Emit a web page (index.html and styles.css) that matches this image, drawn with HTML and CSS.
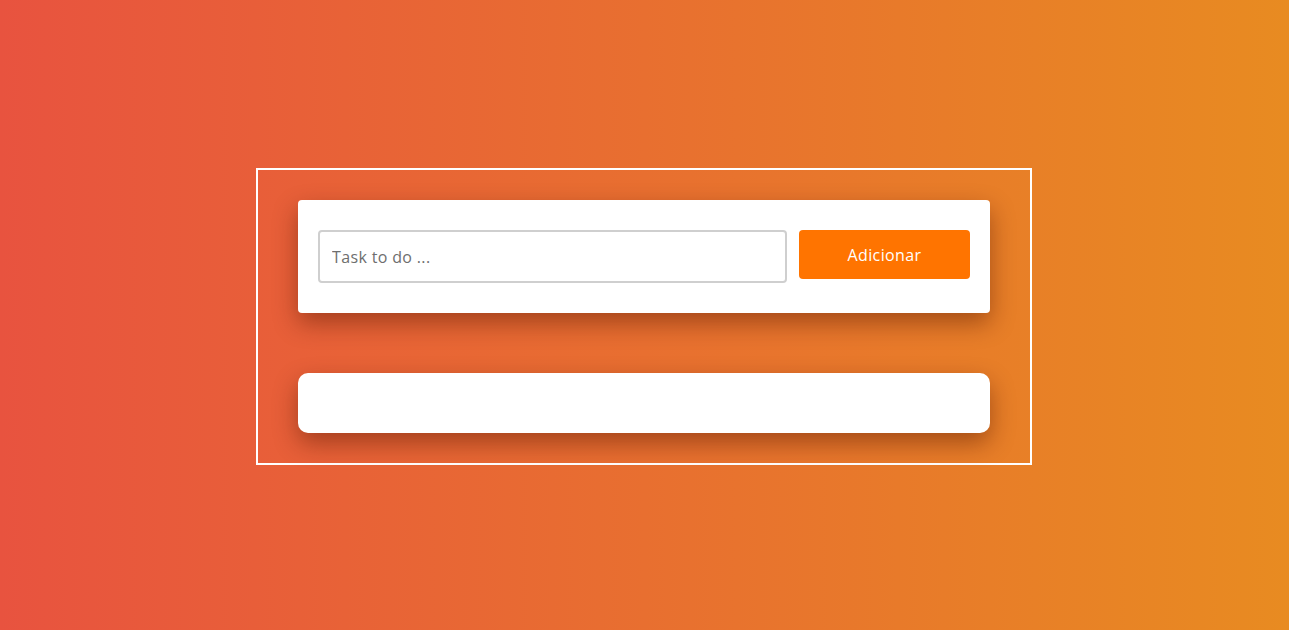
FILE: index.html
```html
<!DOCTYPE html>
<html lang="pt">
<head>
<meta charset="utf-8">
<title>Tasks</title>
<link rel="stylesheet" href="styles.css">
</head>
<body>
<div class="page">
  <div class="frame">
    <form class="card form-card">
      <input class="task-input" type="text" placeholder="Task to do ...">
      <button class="add-btn" type="button">Adicionar</button>
    </form>
    <div class="card list-card"></div>
  </div>
</div>
</body>
</html>
```
FILE: styles.css
```css
* { box-sizing: border-box; }
html, body { margin: 0; padding: 0; }
body {
  font-family: "Open Sans", "Noto Sans", sans-serif;
  background: linear-gradient(to right, #e8533f, #e88b21);
  min-height: 100vh;
}
.page {
  min-height: 100vh;
  display: flex;
  align-items: center;
  justify-content: center;
  padding-top: 3px;
}
.frame {
  width: 776px;
  margin-right: 1px;
  border: 2px solid #fff;
  padding: 30px 40px;
  display: flex;
  flex-direction: column;
  gap: 60px;
}
.card {
  background: #fff;
  box-shadow: 0 10px 24px rgba(80, 20, 0, 0.45);
}
.form-card {
  margin: 0;
  border-radius: 4px;
  padding: 30px 20px;
  display: flex;
  align-items: flex-start;
  gap: 12px;
}
.task-input {
  flex: 1;
  height: 53px;
  border: 2px solid #cfcfcf;
  border-radius: 4px;
  padding: 0 12px;
  font-family: inherit;
  font-size: 16px;
  font-weight: 500;
  letter-spacing: 0.35px;
  color: #333;
  outline: none;
}
.task-input::placeholder { color: #6e6e6e; }
.add-btn {
  width: 171px;
  height: 49px;
  border: none;
  border-radius: 4px;
  background: #ff7400;
  color: #fff;
  font-family: inherit;
  font-size: 16px;
  font-weight: 500;
  letter-spacing: 0.4px;
  cursor: pointer;
}
.list-card {
  height: 60px;
  border-radius: 10px;
}
```
